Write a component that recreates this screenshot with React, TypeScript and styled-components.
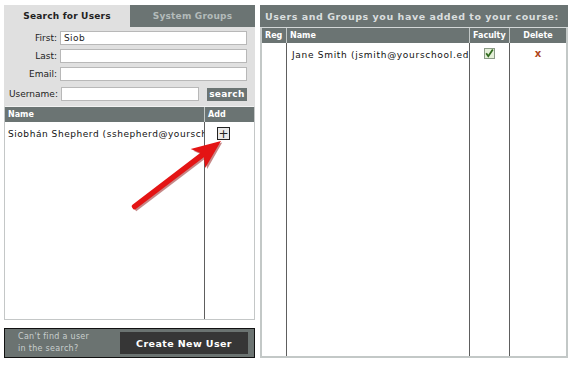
import React from 'react';
import styled, { createGlobalStyle } from 'styled-components';

const GlobalStyle = createGlobalStyle`
  html, body {
    margin: 0;
    padding: 0;
    background: #ffffff;
  }
  body {
    font-family: 'DejaVu Sans', Verdana, sans-serif;
  }
`;

const users = [{ name: 'Siobhán Shepherd (sshepherd@yourschool.edu)' }];
const added = [{ name: 'Jane Smith (jsmith@yourschool.edu)', faculty: true }];

function App() {
  return (
    <>
      <GlobalStyle />
      <Page>
        <LeftColumn>
          <SearchPanel>
            <Tabs>
              <Tab $active>Search for Users</Tab>
              <Tab>System Groups</Tab>
            </Tabs>
            <SearchForm>
              <FieldRow>
                <Label>First:</Label>
                <Input defaultValue="Siob" />
              </FieldRow>
              <FieldRow>
                <Label>Last:</Label>
                <Input />
              </FieldRow>
              <FieldRow $gap={6}>
                <Label>Email:</Label>
                <Input />
              </FieldRow>
              <FieldRow>
                <Label>Username:</Label>
                <Input $narrow />
                <SearchButton>search</SearchButton>
              </FieldRow>
            </SearchForm>
            <ResultsTable>
              <HeadRow $cols="200px 1fr">
                <HeadCell>Name</HeadCell>
                <HeadCell>Add</HeadCell>
              </HeadRow>
              <BodyGrid $cols="200px 1fr">
                <BodyCell>
                  {users.map((u) => (
                    <RowText key={u.name}>{u.name}</RowText>
                  ))}
                </BodyCell>
                <BodyCell $last>
                  <PlusButton>+</PlusButton>
                </BodyCell>
              </BodyGrid>
            </ResultsTable>
          </SearchPanel>
          <CreateBox>
            <CreateHint>
              Can't find a user
              <br />
              in the search?
            </CreateHint>
            <CreateButton>Create New User</CreateButton>
          </CreateBox>
        </LeftColumn>

        <AddedPanel>
          <AddedTitle>Users and Groups you have added to your course:</AddedTitle>
          <AddedTable>
            <HeadRow $cols="25px 183px 40px 1fr">
              <HeadCell>Reg</HeadCell>
              <HeadCell>Name</HeadCell>
              <HeadCell>Faculty</HeadCell>
              <HeadCell $center>Delete</HeadCell>
            </HeadRow>
            <BodyGrid $cols="25px 183px 40px 1fr">
              <BodyCell />
              <BodyCell>
                {added.map((a) => (
                  <RowText key={a.name} $indent={5} $spacing={0.7}>
                    {a.name}
                  </RowText>
                ))}
              </BodyCell>
              <BodyCell $center>
                <CheckMark>
                  <svg width="11" height="11" viewBox="0 0 11 11">
                    <rect x="0.5" y="0.5" width="10" height="10" fill="#e4efd8" stroke="#8a9a86" />
                    <path d="M2.2 5.2 L4.3 8.2 L8.8 1.6" fill="none" stroke="#2f6a1e" strokeWidth="1.8" />
                  </svg>
                </CheckMark>
              </BodyCell>
              <BodyCell $center $last>
                <DeleteMark>x</DeleteMark>
              </BodyCell>
            </BodyGrid>
          </AddedTable>
        </AddedPanel>

        <Arrow width="572" height="365" viewBox="0 0 572 365">
          <g transform="translate(221,141) rotate(-37.3)">
            <rect x="-110" y="-1.5" width="92" height="6" fill="#8d1010" opacity="0.5" />
            <polygon points="0,2 -28,-9 -22,2 -28,14" fill="#8d1010" opacity="0.5" />
            <rect x="-111" y="-3" width="92" height="5.5" rx="2" fill="#e41414" />
            <polygon points="0,0 -29,-12 -22,0 -29,12" fill="#e41414" />
          </g>
        </Arrow>
      </Page>
    </>
  );
}

export default App;

const Page = styled.div`
  position: relative;
  display: flex;
  gap: 5px;
  width: 572px;
  height: 365px;
  padding: 5px 4px 7px 4px;
  box-sizing: border-box;
`;

const LeftColumn = styled.div`
  display: flex;
  flex-direction: column;
  gap: 8px;
  width: 251px;
`;

const SearchPanel = styled.div`
  display: flex;
  flex-direction: column;
  height: 315px;
  background: #e0e0e0;
`;

const Tabs = styled.div`
  display: flex;
  height: 22px;
`;

const Tab = styled.div<{ $active?: boolean }>`
  flex: 1;
  display: flex;
  align-items: center;
  justify-content: center;
  font-size: 9px;
  font-weight: 700;
  letter-spacing: 0.2px;
  background: ${(p) => (p.$active ? '#e0e0e0' : '#6b7473')};
  color: ${(p) => (p.$active ? '#222222' : '#b3bbba')};
  &:first-child {
    flex: 0 0 126px;
  }
`;

const SearchForm = styled.div`
  display: flex;
  flex-direction: column;
  padding: 4px 8px 5px 5px;
`;

const FieldRow = styled.div<{ $gap?: number }>`
  display: flex;
  align-items: center;
  gap: 3px;
  height: 14px;
  margin-bottom: ${(p) => (p.$gap ?? 4)}px;
  &:last-child {
    margin-bottom: 0;
  }
`;

const Label = styled.span`
  flex: 0 0 48px;
  text-align: right;
  font-size: 9px;
  color: #222222;
`;

const Input = styled.input<{ $narrow?: boolean }>`
  flex: ${(p) => (p.$narrow ? '0 0 138px' : '1')};
  height: 14px;
  box-sizing: border-box;
  border: 1px solid #b8b8b8;
  background: #ffffff;
  padding: 0 3px;
  font-family: 'DejaVu Sans', Verdana, sans-serif;
  font-size: 9px;
  letter-spacing: 0.4px;
  color: #222222;
  outline: none;
`;

const SearchButton = styled.div`
  margin-left: 5px;
  width: 40px;
  height: 13px;
  display: flex;
  align-items: center;
  justify-content: center;
  background: #6b7473;
  color: #ffffff;
  font-size: 9px;
  font-weight: 700;
  letter-spacing: 0.3px;
`;

const ResultsTable = styled.div`
  flex: 1;
  display: flex;
  flex-direction: column;
  border: 1px solid #c4c7c7;
  border-top: 1px solid #f2f2f2;
  background: #ffffff;
`;

const HeadRow = styled.div<{ $cols: string }>`
  display: grid;
  grid-template-columns: ${(p) => p.$cols};
  height: 15px;
  background: #6b7473;
`;

const HeadCell = styled.div<{ $center?: boolean }>`
  display: flex;
  align-items: center;
  justify-content: ${(p) => (p.$center ? 'center' : 'flex-start')};
  padding-left: ${(p) => (p.$center ? 0 : 3)}px;
  font-size: 8px;
  font-weight: 700;
  color: #ffffff;
  border-right: 1px solid #c2c8c7;
  &:last-child {
    border-right: none;
  }
`;

const BodyGrid = styled.div<{ $cols: string }>`
  flex: 1;
  display: grid;
  grid-template-columns: ${(p) => p.$cols};
`;

const BodyCell = styled.div<{ $center?: boolean; $last?: boolean }>`
  display: flex;
  flex-direction: column;
  align-items: ${(p) => (p.$center ? 'center' : 'stretch')};
  overflow: hidden;
  border-right: ${(p) => (p.$last ? 'none' : '1px solid #5e5e5e')};
  min-width: 0;
`;

const RowText = styled.div<{ $indent?: number; $spacing?: number }>`
  padding: 7px 0 0 ${(p) => (p.$indent ?? 3)}px;
  font-size: 9px;
  letter-spacing: ${(p) => (p.$spacing ?? 0.55)}px;
  white-space: nowrap;
  overflow: hidden;
  color: #111111;
`;

const PlusButton = styled.div`
  margin: 5px 0 0 12px;
  align-self: flex-start;
  width: 11px;
  height: 11px;
  display: flex;
  align-items: center;
  justify-content: center;
  border: 1px solid #222222;
  background: #e8e8e8;
  font-size: 12px;
  line-height: 1;
  color: #222222;
`;

const CreateBox = styled.div`
  display: flex;
  align-items: center;
  justify-content: space-between;
  height: 30px;
  box-sizing: border-box;
  padding: 0 6px 0 13px;
  background: #6b7371;
  border: 1px solid #111111;
`;

const CreateHint = styled.div`
  font-size: 8px;
  line-height: 12px;
  letter-spacing: 0.3px;
  color: #c9cfce;
`;

const CreateButton = styled.div`
  width: 128px;
  height: 22px;
  display: flex;
  align-items: center;
  justify-content: center;
  background: #363636;
  color: #ffffff;
  font-size: 9.5px;
  font-weight: 700;
  letter-spacing: 0.4px;
`;

const AddedPanel = styled.div`
  width: 308px;
  display: flex;
  flex-direction: column;
`;

const AddedTitle = styled.div`
  height: 22px;
  display: flex;
  align-items: center;
  padding-left: 5px;
  background: #6b7473;
  color: #dadede;
  font-size: 9.5px;
  font-weight: 700;
  letter-spacing: 0.55px;
  white-space: nowrap;
  overflow: hidden;
  border-bottom: 1px solid #d4d8d8;
`;

const AddedTable = styled.div`
  flex: 1;
  display: flex;
  flex-direction: column;
  background: #ffffff;
  border: 2px solid #c3c8c7;
  border-top: none;
`;

const CheckMark = styled.div`
  margin-top: 5px;
  display: flex;
`;

const DeleteMark = styled.div`
  margin-top: 5px;
  font-size: 10px;
  font-weight: 700;
  color: #b0461c;
`;

const Arrow = styled.svg`
  position: absolute;
  left: 0;
  top: 0;
  pointer-events: none;
`;
